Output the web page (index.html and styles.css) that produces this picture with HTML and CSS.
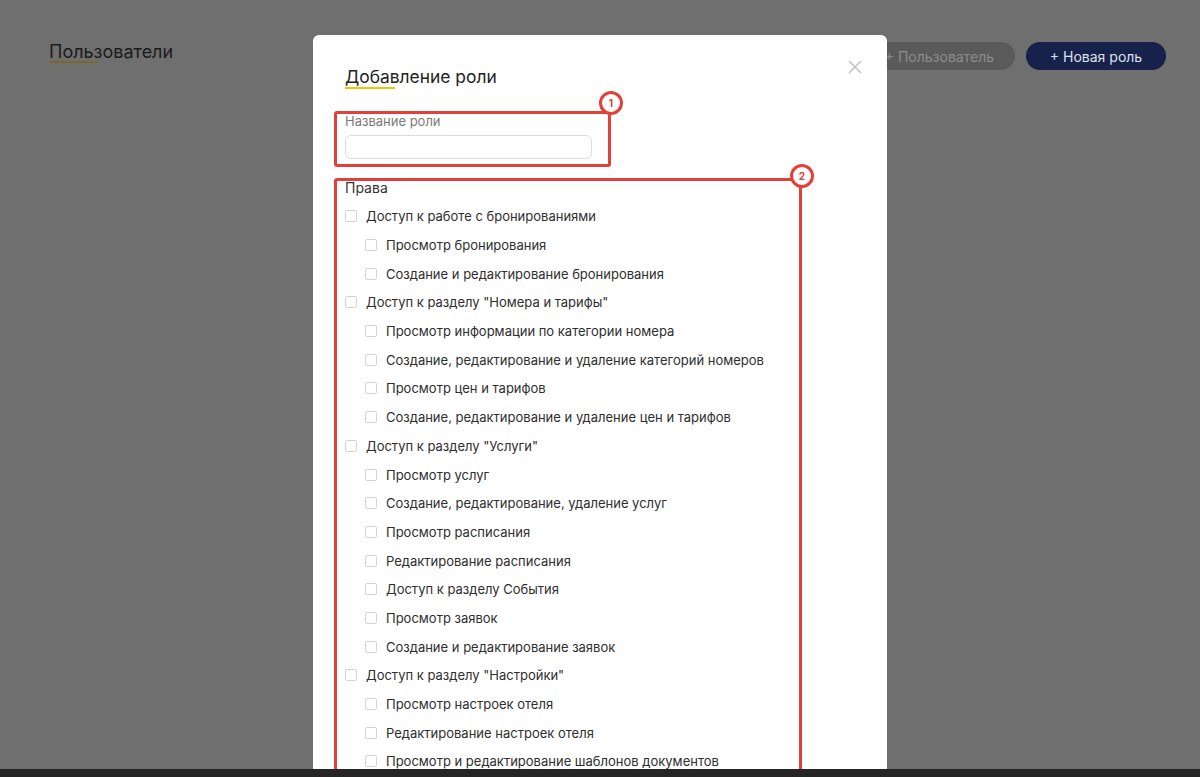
FILE: index.html
```html
<!DOCTYPE html>
<html lang="ru">
<head>
  <meta charset="UTF-8" />
  <title>Пользователи</title>
  <link rel="stylesheet" href="styles.css">
</head>
<body>

<div class="page">
  <div class="page-header">
    <h1 class="page-title">Пользователи</h1>
    <div class="header-actions">
      <button class="btn btn-muted">+ Пользователь</button>
      <button class="btn btn-primary">+ Новая роль</button>
    </div>
  </div>
</div>

<div class="modal">
  <button class="modal-close" aria-label="Закрыть">
    <svg width="16" height="16" viewBox="0 0 16 16"><path d="M2 2L14 14M14 2L2 14" stroke="#bdbdbd" stroke-width="1.4" fill="none"/></svg>
  </button>

  <h2 class="modal-title">Добавление роли</h2>

  <div class="field">
    <label class="field-label">Название роли</label>
    <input type="text" class="field-input">
  </div>

  <div class="rights">
    <div class="rights-title">Права</div>
    <div class="check-row"><span class="check"></span>Доступ к работе с бронированиями</div>
    <div class="check-row sub"><span class="check"></span>Просмотр бронирования</div>
    <div class="check-row sub"><span class="check"></span>Создание и редактирование бронирования</div>
    <div class="check-row"><span class="check"></span>Доступ к разделу "Номера и тарифы"</div>
    <div class="check-row sub"><span class="check"></span>Просмотр информации по категории номера</div>
    <div class="check-row sub"><span class="check"></span>Создание, редактирование и удаление категорий номеров</div>
    <div class="check-row sub"><span class="check"></span>Просмотр цен и тарифов</div>
    <div class="check-row sub"><span class="check"></span>Создание, редактирование и удаление цен и тарифов</div>
    <div class="check-row"><span class="check"></span>Доступ к разделу "Услуги"</div>
    <div class="check-row sub"><span class="check"></span>Просмотр услуг</div>
    <div class="check-row sub"><span class="check"></span>Создание, редактирование, удаление услуг</div>
    <div class="check-row sub"><span class="check"></span>Просмотр расписания</div>
    <div class="check-row sub"><span class="check"></span>Редактирование расписания</div>
    <div class="check-row sub"><span class="check"></span>Доступ к разделу События</div>
    <div class="check-row sub"><span class="check"></span>Просмотр заявок</div>
    <div class="check-row sub"><span class="check"></span>Создание и редактирование заявок</div>
    <div class="check-row"><span class="check"></span>Доступ к разделу "Настройки"</div>
    <div class="check-row sub"><span class="check"></span>Просмотр настроек отеля</div>
    <div class="check-row sub"><span class="check"></span>Редактирование настроек отеля</div>
    <div class="check-row sub"><span class="check"></span>Просмотр и редактирование шаблонов документов</div>
  </div>

  <!-- пометки на скриншоте -->
  <div class="mark mark-1"><span class="mark-num">1</span></div>
  <div class="mark mark-2"><span class="mark-num">2</span></div>
</div>

<div class="bottom-bar"></div>

</body>
</html>
```

FILE: styles.css
```css
html, body {
  margin: 0;
  height: 777px;
  overflow: hidden;
}

body {
  background-color: #6f6f6f;
  font-family: Inter, "Noto Sans", sans-serif;
  color: #222;
}

.page-header {
  display: flex;
  justify-content: space-between;
  align-items: flex-start;
  padding: 42px 34px 0 49px;
}

.page-title {
  position: relative;
  margin: 0;
  font-size: 18px;
  font-weight: 400;
  line-height: 20px;
  color: #1b1b1b;
}

.page-title::after {
  content: "";
  position: absolute;
  left: 0;
  top: 19px;
  width: 49px;
  height: 2px;
  background-color: #7a6a28;
}

.header-actions {
  display: flex;
  gap: 11px;
}

.btn {
  height: 28px;
  padding: 0 21px;
  border: 0;
  border-radius: 14px;
  font-family: inherit;
  font-size: 14px;
}

.btn-muted {
  background-color: #5a5a5a;
  color: #8c8c8c;
}

.btn-primary {
  width: 140px;
  background-color: #16214c;
  color: #dfe2ea;
}

.modal {
  position: absolute;
  left: 313px;
  top: 35px;
  width: 542px;
  height: 703px;
  padding: 31px 0 0 32px;
  background-color: #fff;
  border-radius: 6px 6px 0 0;
}

.modal-close {
  position: absolute;
  right: 24px;
  top: 24px;
  padding: 0;
  border: 0;
  background: none;
}

.modal-title {
  position: relative;
  display: inline-block;
  margin: 0;
  font-size: 17.4px;
  font-weight: 400;
  line-height: 22px;
  color: #222;
}

.modal-title::after {
  content: "";
  position: absolute;
  left: 0;
  top: 21px;
  width: 50px;
  height: 2px;
  background-color: #f2c500;
}

.field {
  margin-top: 25px;
}

.field-label {
  display: block;
  font-size: 13px;
  line-height: 16px;
  color: #7a7a7a;
}

.field-input {
  display: block;
  width: 247px;
  height: 24px;
  margin-top: 6px;
  border: 1px solid #dcdcdc;
  border-radius: 6px;
  box-sizing: border-box;
}

.rights {
  margin-top: 20px;
}

.rights-title {
  font-size: 14px;
  line-height: 18px;
  color: #333;
  margin-bottom: 5px;
}

.check-row {
  display: flex;
  align-items: center;
  height: 28.7px;
  font-size: 13px;
  color: #2e2e2e;
}

.check-row.sub {
  padding-left: 20px;
}

.check {
  width: 10px;
  height: 10px;
  margin-right: 9px;
  border: 1px solid #d4d4d4;
  border-radius: 2px;
}

.mark {
  position: absolute;
  left: 21px;
  border: 3px solid #e2403b;
  border-radius: 3px;
  box-sizing: border-box;
}

.mark-1 {
  top: 76px;
  width: 277px;
  height: 56px;
}

.mark-2 {
  top: 143px;
  width: 468px;
  height: 594px;
}

.mark-num {
  position: absolute;
  width: 24px;
  height: 24px;
  border: 3px solid #e2403b;
  border-radius: 50%;
  background-color: #fff;
  box-sizing: border-box;
  color: #d8403b;
  font-size: 10px;
  font-weight: 700;
  line-height: 18px;
  text-align: center;
}

.mark-1 .mark-num {
  right: -15px;
  top: -23px;
}

.mark-2 .mark-num {
  right: -15px;
  top: -17px;
}

.bottom-bar {
  position: absolute;
  left: 0;
  right: 0;
  bottom: 0;
  height: 8px;
  background-color: #252525;
}
```
